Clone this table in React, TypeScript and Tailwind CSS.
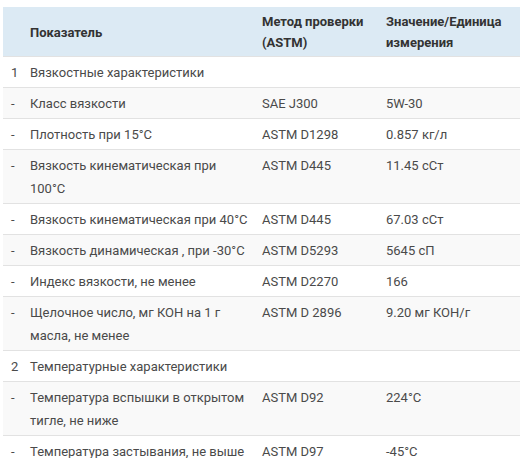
import React from "react";

type Row = { n: string; name: string; method: string; value: string };

const rows: Row[] = [
  { n: "1", name: "Вязкостные характеристики", method: "", value: "" },
  { n: "-", name: "Класс вязкости", method: "SAE J300", value: "5W-30" },
  { n: "-", name: "Плотность при 15°C", method: "ASTM D1298", value: "0.857 кг/л" },
  { n: "-", name: "Вязкость кинематическая при 100°C", method: "ASTM D445", value: "11.45 сСт" },
  { n: "-", name: "Вязкость кинематическая при 40°C", method: "ASTM D445", value: "67.03 сСт" },
  { n: "-", name: "Вязкость динамическая , при -30°C", method: "ASTM D5293", value: "5645 сП" },
  { n: "-", name: "Индекс вязкости, не менее", method: "ASTM D2270", value: "166" },
  { n: "-", name: "Щелочное число, мг КОН на 1 г масла, не менее", method: "ASTM D 2896", value: "9.20 мг КОН/г" },
  { n: "2", name: "Температурные характеристики", method: "", value: "" },
  { n: "-", name: "Температура вспышки в открытом тигле, не ниже", method: "ASTM D92", value: "224°C" },
  { n: "-", name: "Температура застывания, не выше", method: "ASTM D97", value: "-45°C" },
];

export default function App() {
  return (
    <div className="w-[522px] h-[458px] overflow-hidden bg-white pt-[7px] pl-[3px]" style={{ fontFamily: "Roboto, 'Noto Sans', sans-serif" }}>
      <table className="w-[517px] table-fixed border-collapse text-[13px]">
        <colgroup>
          <col className="w-[19px]" />
          <col className="w-[232px]" />
          <col className="w-[124px]" />
          <col />
        </colgroup>
        <thead>
          <tr className="bg-[#dceaf4] text-[#333333] font-bold leading-[21px] border-b border-[#e2e2e2]">
            <th className="pt-[4px] pb-[3px]"></th>
            <th className="text-left font-bold pl-[8px] pr-[4px] pt-[4px] pb-[3px] align-middle">Показатель</th>
            <th className="text-left font-bold pl-[8px] pr-[4px] pt-[4px] pb-[3px] align-middle">Метод проверки (ASTM)</th>
            <th className="text-left font-bold pl-[8px] pr-[4px] pt-[4px] pb-[3px] align-middle">Значение/Единица измерения</th>
          </tr>
        </thead>
        <tbody className="text-[#4a4a4a] leading-[23px]">
          {rows.map((r, i) => (
            <tr key={i} className={`border-b border-[#e2e2e2] ${i % 2 === 1 ? "bg-[#f9f9f9]" : "bg-white"}`}>
              <td className="align-top pl-[8px] pt-[4px] pb-[3px]">{r.n}</td>
              <td className="align-top pl-[8px] pr-[4px] pt-[4px] pb-[3px]">{r.name}</td>
              <td className="align-top pl-[8px] pr-[4px] pt-[4px] pb-[3px]">{r.method}</td>
              <td className="align-top pl-[8px] pr-[4px] pt-[4px] pb-[3px]">{r.value}</td>
            </tr>
          ))}
        </tbody>
      </table>
    </div>
  );
}
